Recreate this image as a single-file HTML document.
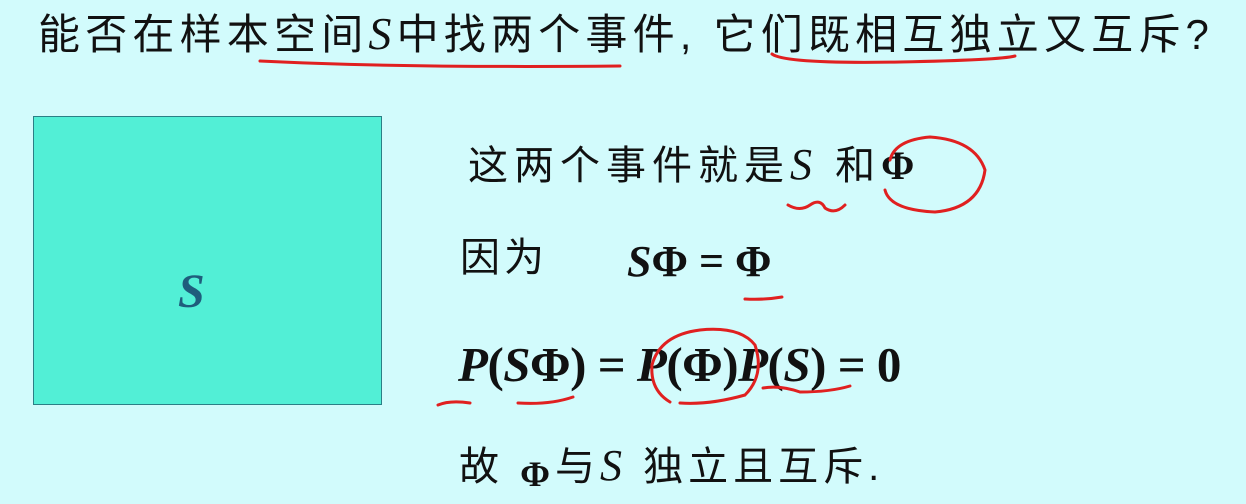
<!DOCTYPE html>
<html><head><meta charset="utf-8"><style>
body{margin:0;width:1246px;height:504px;background:#d2fbfc;overflow:hidden;position:relative;font-family:"Liberation Serif","Noto Serif CJK SC",serif;color:#111}
.t{position:absolute;white-space:nowrap;line-height:1}
.cj{font-family:"Liberation Sans","Noto Sans CJK SC",sans-serif}
i{font-family:"Liberation Serif",serif}
b{font-family:"Liberation Serif",serif}
</style></head><body>
<div class="t cj" style="left:38px;top:11px;font-size:42px;letter-spacing:5.2px">能否在样本空间<i style="font-size:46px">S</i>中找两个事件, 它们既相互独立又互斥?</div>
<div style="position:absolute;left:33px;top:116px;width:347px;height:287px;background:#52efd6;border:1px solid #2b7f86"></div>
<div class="t" style="left:178px;top:268px;font-size:48px;color:#1f5d7c"><b><i>S</i></b></div>
<div class="t cj" style="left:468px;top:143px;font-size:40px;letter-spacing:6px">这两个事件就是<i style="font-size:44px">S</i> 和<b>Φ</b></div>
<div class="t cj" style="left:460px;top:238px;font-size:40px;letter-spacing:4px">因为</div>
<div class="t" style="left:627px;top:240px;font-size:44px;font-weight:bold"><i>S</i>Φ = Φ</div>
<div class="t" style="left:458px;top:340px;font-size:49px;font-weight:bold;letter-spacing:-0.5px"><i>P</i>(<i>S</i>Φ) = <i>P</i>(Φ)<i>P</i>(<i>S</i>) = 0</div>
<div class="t cj" style="left:459px;top:444px;font-size:40px;letter-spacing:5px">故 <b style="font-size:36px;position:relative;top:6px">Φ</b>与<i style="font-size:44px">S</i> 独立且互斥.</div>
<svg width="1246" height="504" style="position:absolute;left:0;top:0" fill="none" stroke="#e02020" stroke-width="3" stroke-linecap="round">
<path d="M260 61 Q400 68 620 66"/>
<path d="M772 54 Q785 64 900 62 Q1000 60 1015 56"/>
<path d="M788 205 Q800 212 810 205 Q820 198 825 208 Q835 215 845 205"/>
<path d="M890 160 Q895 140 930 137 Q975 140 985 170 Q980 208 935 212 Q890 210 885 190"/>
<path d="M745 299 Q765 300 782 297"/>
<path d="M438 405 Q450 400 470 403"/>
<path d="M518 403 Q550 405 573 397"/>
<path d="M670 402 Q650 390 652 365 Q660 335 700 330 Q740 326 755 345 Q765 375 745 395 Q710 405 680 403"/>
<path d="M763 388 Q780 385 800 392 Q830 392 850 386"/>
</svg>
</body></html>
